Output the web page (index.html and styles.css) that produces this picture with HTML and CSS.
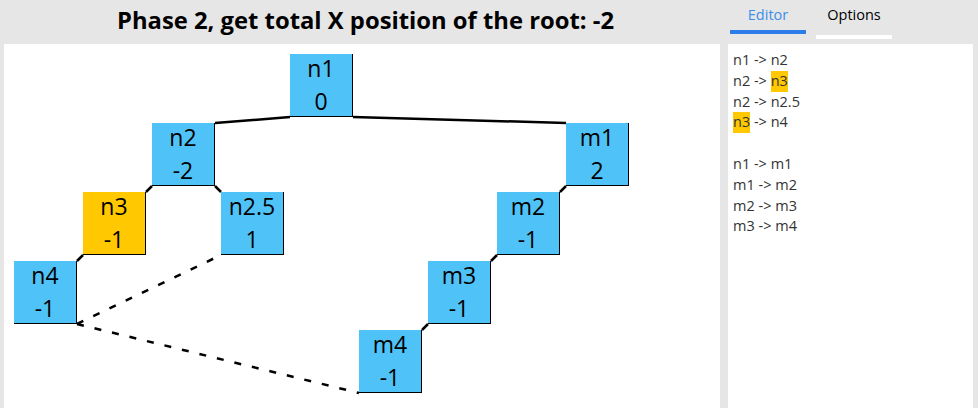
FILE: index.html
```html
<!DOCTYPE html>
<html lang="en">
<head>
    <meta charset="UTF-8">
    <title>Tree layout - phase 2</title>
    <link rel="stylesheet" href="styles.css">
</head>
<body>
    <div class="app">
        <div class="main">
            <h1 class="title">Phase 2, get total X position of the root: -2</h1>
            <div class="canvas">
                <!-- edges, in canvas coordinates -->
                <svg class="edges" width="716" height="364" xmlns="http://www.w3.org/2000/svg">
                    <g stroke="#000" stroke-width="2.5" fill="none">
                        <line x1="286" y1="73" x2="211" y2="79"/>
                        <line x1="349" y1="73" x2="562" y2="79"/>
                        <line x1="148" y1="142" x2="142" y2="148"/>
                        <line x1="211" y1="142" x2="217" y2="148"/>
                        <line x1="79" y1="211" x2="73" y2="217"/>
                        <line x1="562" y1="142" x2="556" y2="148"/>
                        <line x1="493" y1="211" x2="487" y2="217"/>
                        <line x1="424" y1="280" x2="418" y2="286"/>
                    </g>
                    <g stroke="#000" stroke-width="2.5" stroke-dasharray="7 11" fill="none">
                        <line x1="73" y1="280" x2="217" y2="211"/>
                        <line x1="73" y1="280" x2="355" y2="349"/>
                    </g>
                </svg>

                <div class="node" style="left: 286px; top: 10px;"><span>n1</span><span>0</span></div>
                <div class="node" style="left: 148px; top: 79px;"><span>n2</span><span>-2</span></div>
                <div class="node active" style="left: 79px; top: 148px;"><span>n3</span><span>-1</span></div>
                <div class="node" style="left: 217px; top: 148px;"><span>n2.5</span><span>1</span></div>
                <div class="node" style="left: 10px; top: 217px;"><span>n4</span><span>-1</span></div>
                <div class="node" style="left: 562px; top: 79px;"><span>m1</span><span>2</span></div>
                <div class="node" style="left: 493px; top: 148px;"><span>m2</span><span>-1</span></div>
                <div class="node" style="left: 424px; top: 217px;"><span>m3</span><span>-1</span></div>
                <div class="node" style="left: 355px; top: 286px;"><span>m4</span><span>-1</span></div>
            </div>
        </div>

        <div class="side">
            <div class="tabs">
                <div class="tab selected">Editor</div>
                <div class="tab">Options</div>
            </div>
            <div class="editor">
                <div>n1 -&gt; n2</div>
                <div>n2 -&gt; <mark>n3</mark></div>
                <div>n2 -&gt; n2.5</div>
                <div><mark>n3</mark> -&gt; n4</div>
                <div>&nbsp;</div>
                <div>n1 -&gt; m1</div>
                <div>m1 -&gt; m2</div>
                <div>m2 -&gt; m3</div>
                <div>m3 -&gt; m4</div>
            </div>
        </div>
    </div>
</body>
</html>
```

FILE: styles.css
```css
body, html {
    margin: 0;
    padding: 0;
    height: 100%;
    background: #e6e6e6;
    font-family: 'Open Sans', sans-serif;
    overflow: hidden;
}
.app {
    display: flex;
    height: 408px;
}
.main {
    width: 720px;
    display: flex;
    flex-direction: column;
}
.title {
    margin: 0;
    height: 44px;
    padding-left: 11px;
    line-height: 40px;
    font-size: 23.8px;
    font-weight: bold;
    text-align: center;
    color: #000;
}
.canvas {
    flex: 1;
    margin-left: 4px;
    background: white;
    position: relative;
    overflow: hidden;
}
.edges {
    position: absolute;
    left: 0;
    top: 0;
}
.node {
    position: absolute;
    width: 62px;
    height: 62px;
    background: #4fc3f7;
    border-right: 1px solid #000;
    border-bottom: 1px solid #000;
    display: flex;
    flex-direction: column;
    align-items: center;
    justify-content: center;
    font-size: 23px;
    line-height: 33px;
    color: #000;
}
.node.active {
    background: #ffc800;
}
.side {
    flex: 1;
    margin-left: 8px;
    margin-right: 5px;
    display: flex;
    flex-direction: column;
}
.tabs {
    height: 44px;
    display: flex;
    align-items: flex-start;
    gap: 10px;
    padding-left: 2px;
}
.tab {
    width: 76px;
    text-align: center;
    font-size: 14.5px;
    line-height: 20px;
    padding: 5px 0 10px;
    border-bottom: 4px solid white;
    color: #000;
}
.tab.selected {
    color: #3b8eea;
    padding-bottom: 5px;
    border-bottom-color: #2b7de9;
}
.editor {
    flex: 1;
    background: white;
    padding: 6px 5px;
    font-size: 14.5px;
    line-height: 20.8px;
    color: #333;
}
.editor mark {
    display: inline-block;
    background: #ffc800;
    color: #333;
}
```
